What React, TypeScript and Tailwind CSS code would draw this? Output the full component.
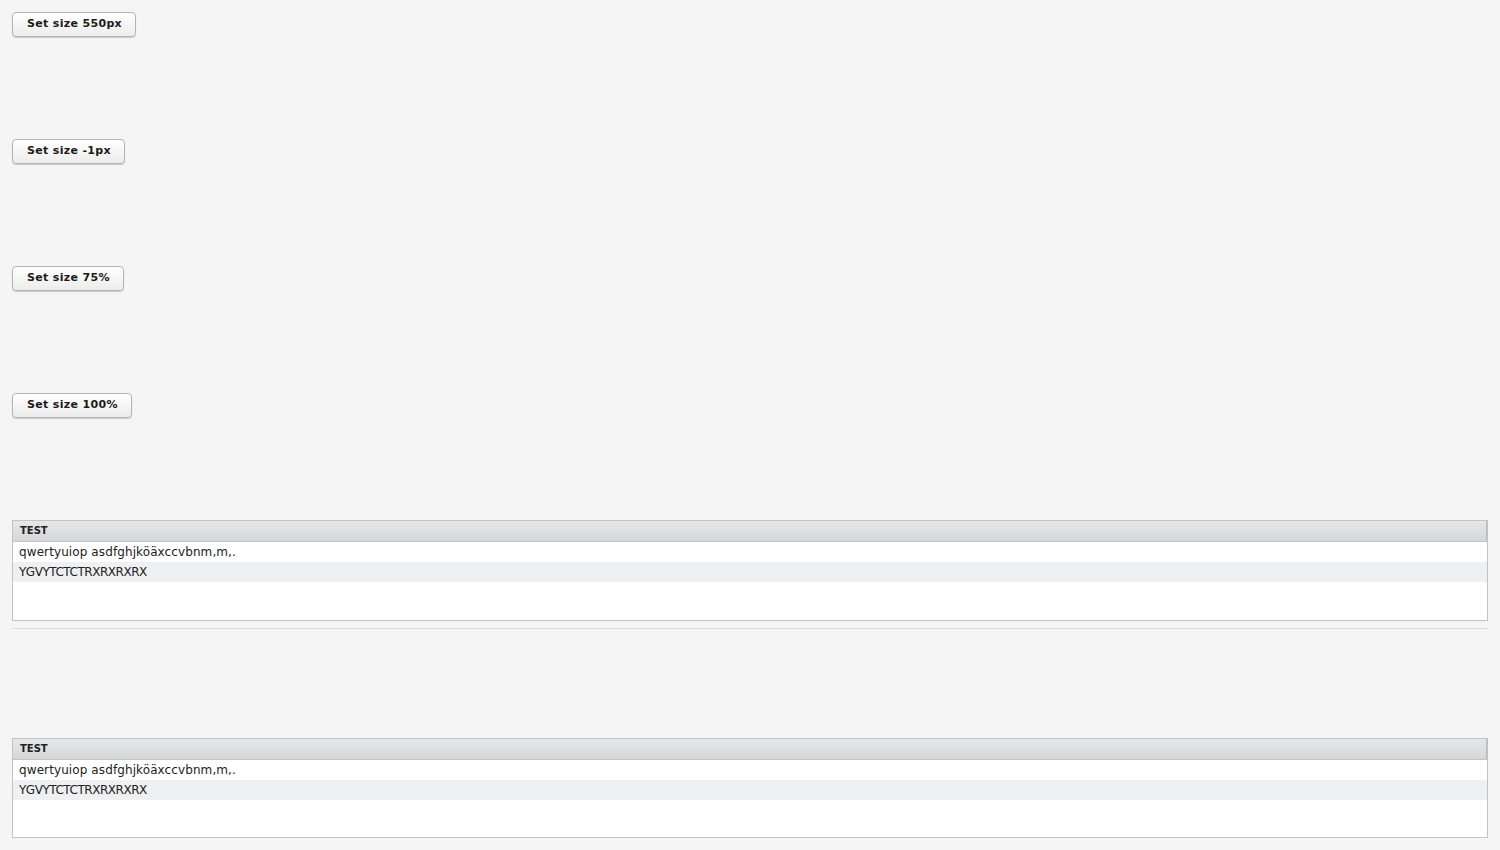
import * as React from 'react'

// ── Data ──────────────────────────────────────────────────────────────────────
const ROWS = [
  { text: 'qwertyuiop asdfghjköäxccvbnm,m,.', cls: 'bg-white tracking-[0.1px]' },
  { text: 'YGVYTCTCTRXRXRXRX',               cls: 'bg-[#eff0f1] tracking-[-0.47px]' },
]
const SIZES = ['550px', '-1px', '75%', '100%']

const FONT = { fontFamily: '"DejaVu Sans", Verdana, sans-serif' }

// ── Button ────────────────────────────────────────────────────────────────────
function SizeButton({ label }: { label: string }) {
  return (
    <button
      type="button"
      className="h-[25px] rounded-[4px] border border-[#b4b4b4] bg-gradient-to-b from-white to-[#ececec] pl-[14px] pr-[13px] text-[11px] font-bold tracking-[0.03em] text-[#1b1b1b] shadow-[0_1px_1px_rgba(0,0,0,0.18)]"
      style={FONT}
    >
      Set size {label}
    </button>
  )
}

// ── Table ─────────────────────────────────────────────────────────────────────
function TestTable({ height }: { height: string }) {
  return (
    <div className={`flex flex-col border border-[#c2c3c4] bg-white ${height}`} style={FONT}>
      <div className="flex h-[21px] items-center border-b border-[#c2c3c4] bg-gradient-to-b from-[#e6e7e8] to-[#d5d7d9]">
        <div className="flex h-full flex-1 items-center border-r border-[#b9bbbd] pb-px pl-[7px] text-[10px] font-bold text-[#222]">
          TEST
        </div>
      </div>
      {ROWS.map(r => (
        <div key={r.text} className={`flex h-[20px] items-center pl-[6px] text-[12px] text-[#222] ${r.cls}`}>
          {r.text}
        </div>
      ))}
    </div>
  )
}

// ── App ───────────────────────────────────────────────────────────────────────
export default function App() {
  return (
    <div className="min-h-screen bg-[#f5f5f5] p-[12px]">
      <div className="flex flex-col items-start gap-[102px]">
        {SIZES.map(s => <SizeButton key={s} label={s} />)}
      </div>
      <div className="mt-[102px]">
        <TestTable height="h-[101px]" />
      </div>
      <div className="mt-[7px] h-px bg-[#dcdcdc]" />
      <div className="mt-[109px]">
        <TestTable height="h-[100px]" />
      </div>
    </div>
  )
}
